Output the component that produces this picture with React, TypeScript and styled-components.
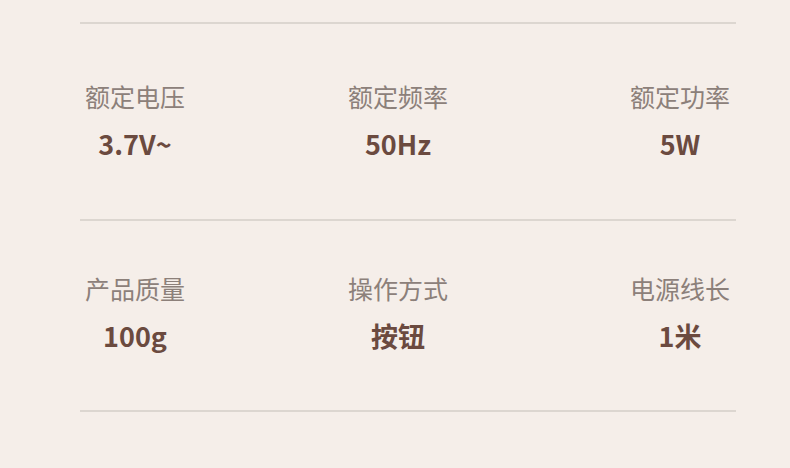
import React from "react";
import styled, { createGlobalStyle } from "styled-components";

const GlobalStyle = createGlobalStyle`
  html, body { margin: 0; padding: 0; background: #f5eee9; }
  body { font-family: "Noto Sans CJK SC", "Noto Sans", sans-serif; }
`;

const Page = styled.div`
  width: 790px;
  height: 468px;
  background: #f5eee9;
  padding: 22px 54px 0 80px;
  box-sizing: border-box;
`;

const Divider = styled.div`
  height: 2px;
  background: #dcd6d0;
`;

const Row = styled.div<{ $top: number; $bottom: number }>`
  display: grid;
  grid-template-columns: 263px 282px 100px;
  padding: ${(p) => p.$top}px 0 ${(p) => p.$bottom}px 5px;
`;

const Spec = styled.div<{ $gap: number }>`
  width: 100px;
  display: flex;
  flex-direction: column;
  align-items: center;
  gap: ${(p) => p.$gap}px;
`;

const Label = styled.div`
  font-size: 25px;
  line-height: 34px;
  color: #8c807a;
  white-space: nowrap;
`;

const Value = styled.div`
  font-size: 27px;
  font-weight: 700;
  line-height: 36px;
  color: #6b4a3f;
  white-space: nowrap;
`;

const rows = [
  {
    top: 55,
    bottom: 57,
    gap: 13,
    items: [
      ["额定电压", "3.7V~"],
      ["额定频率", "50Hz"],
      ["额定功率", "5W"],
    ],
  },
  {
    top: 50,
    bottom: 56,
    gap: 13,
    items: [
      ["产品质量", "100g"],
      ["操作方式", "按钮"],
      ["电源线长", "1米"],
    ],
  },
];

export default function App() {
  return (
    <>
      <GlobalStyle />
      <Page>
        <Divider />
        {rows.map((r, i) => (
          <React.Fragment key={i}>
            <Row $top={r.top} $bottom={r.bottom}>
              {r.items.map(([l, v]) => (
                <Spec key={l} $gap={r.gap}>
                  <Label>{l}</Label>
                  <Value>{v}</Value>
                </Spec>
              ))}
            </Row>
            <Divider />
          </React.Fragment>
        ))}
      </Page>
    </>
  );
}
